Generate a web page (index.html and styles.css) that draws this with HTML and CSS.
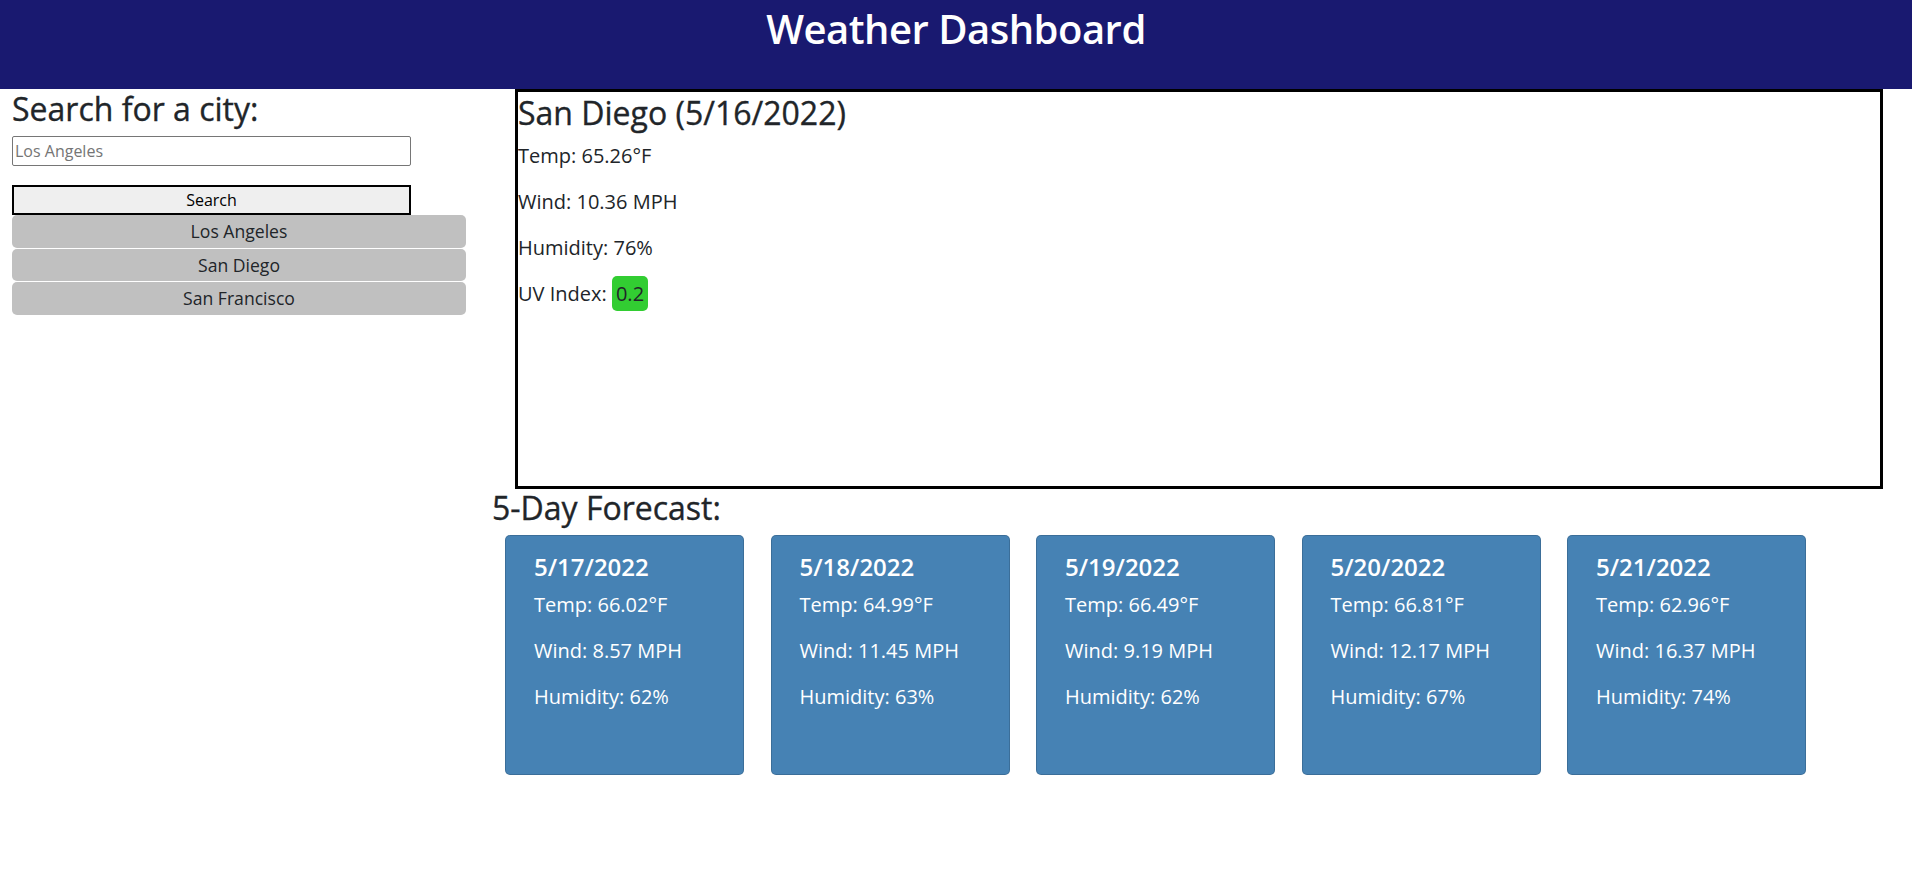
FILE: index.html
```html
<!DOCTYPE html>
<html lang="en">
<head>
<meta charset="utf-8">
<title>Weather Dashboard</title>
<link rel="stylesheet" href="styles.css">
</head>
<body>
<header class="topbar">
  <h1 class="topbar-title">Weather Dashboard</h1>
</header>
<main class="layout">
  <aside class="sidebar">
    <h2 class="heading">Search for a city:</h2>
    <input class="city-input" type="text" placeholder="Los Angeles">
    <button class="search-btn" type="button">Search</button>
    <div class="history">
      <button class="history-btn" type="button">Los Angeles</button>
      <button class="history-btn" type="button">San Diego</button>
      <button class="history-btn" type="button">San Francisco</button>
    </div>
  </aside>
  <section class="content">
    <div class="current">
      <h2 class="heading current-title">San Diego (5/16/2022)</h2>
      <p class="stat">Temp: 65.26°F</p>
      <p class="stat">Wind: 10.36 MPH</p>
      <p class="stat">Humidity: 76%</p>
      <p class="stat">UV Index: <span class="uv uv-low">0.2</span></p>
    </div>
    <h2 class="heading forecast-title">5-Day Forecast:</h2>
    <div class="forecast">
      <div class="day-card">
        <h4 class="day-date">5/17/2022</h4>
        <p class="stat">Temp: 66.02°F</p>
        <p class="stat">Wind: 8.57 MPH</p>
        <p class="stat">Humidity: 62%</p>
      </div>
      <div class="day-card">
        <h4 class="day-date">5/18/2022</h4>
        <p class="stat">Temp: 64.99°F</p>
        <p class="stat">Wind: 11.45 MPH</p>
        <p class="stat">Humidity: 63%</p>
      </div>
      <div class="day-card">
        <h4 class="day-date">5/19/2022</h4>
        <p class="stat">Temp: 66.49°F</p>
        <p class="stat">Wind: 9.19 MPH</p>
        <p class="stat">Humidity: 62%</p>
      </div>
      <div class="day-card">
        <h4 class="day-date">5/20/2022</h4>
        <p class="stat">Temp: 66.81°F</p>
        <p class="stat">Wind: 12.17 MPH</p>
        <p class="stat">Humidity: 67%</p>
      </div>
      <div class="day-card">
        <h4 class="day-date">5/21/2022</h4>
        <p class="stat">Temp: 62.96°F</p>
        <p class="stat">Wind: 16.37 MPH</p>
        <p class="stat">Humidity: 74%</p>
      </div>
    </div>
  </section>
</main>
</body>
</html>
```
FILE: styles.css
```css
* {
  box-sizing: border-box;
}

body {
  margin: 0;
  font-family: "Open Sans", "Noto Sans", "Liberation Sans", sans-serif;
  font-size: 16px;
  line-height: 1.5;
  color: #212529;
  background: #fff;
}

.topbar {
  height: 89px;
  background: #191970;
  padding-top: 5px;
  text-align: center;
}

.topbar-title {
  margin: 0;
  font-size: 40px;
  line-height: 1.2;
  font-weight: 600;
  letter-spacing: -0.5px;
  color: #fff;
}

.layout {
  display: flex;
}

.sidebar {
  width: 478px;
  flex: 0 0 478px;
  padding: 1px 12px 0;
}

.heading {
  margin: 0 0 8px;
  font-size: 32px;
  line-height: 1.2;
  font-weight: 500;
  -webkit-text-stroke: 0.35px #212529;
}

.city-input {
  display: block;
  width: 399px;
  height: 30px;
  margin: 0;
  padding: 1px 2px;
  border: 1px solid #767676;
  border-radius: 2px;
  font-family: inherit;
  font-size: 16px;
  color: #212529;
}

.city-input::placeholder {
  color: #757575;
}

.search-btn {
  display: block;
  width: 399px;
  height: 30px;
  margin: 19px 0 0;
  padding: 0;
  border: 2px solid #000;
  background: #efefef;
  font-family: inherit;
  font-size: 16px;
  line-height: 1.5;
  color: #000;
}

.history {
  display: flex;
  flex-direction: column;
  gap: 1px;
}

.history-btn {
  display: block;
  width: 100%;
  height: 32.5px;
  padding: 0;
  border: 0;
  border-radius: 5px;
  background: #c0c0c0;
  font-family: inherit;
  font-size: 17.6px;
  line-height: 1.5;
  color: #212529;
}

.content {
  flex: 1 1 auto;
}

.current {
  height: 400px;
  margin: 0 29px 0 37px;
  padding-top: 2px;
  border: 3px solid #000;
}

.current-title {
  margin-bottom: 9px;
}

.stat {
  margin: 0 0 16px;
  font-size: 20px;
  line-height: 1.5;
}

.uv {
  padding: 4px 4px;
  border-radius: 5px;
}

.uv-low {
  background: #32cd32;
}

.forecast-title {
  margin-left: 14px;
}

.forecast {
  display: flex;
  gap: 26.5px;
  padding-left: 27px;
}

.day-card {
  width: 239px;
  height: 240px;
  padding: 17px 16px 16px 28px;
  border: 1px solid rgba(0, 0, 0, 0.15);
  border-radius: 5px;
  background: #4682b4;
  color: #fff;
}

.day-date {
  margin: 0 0 8px;
  font-size: 24px;
  line-height: 1.2;
  font-weight: 600;
}
```
